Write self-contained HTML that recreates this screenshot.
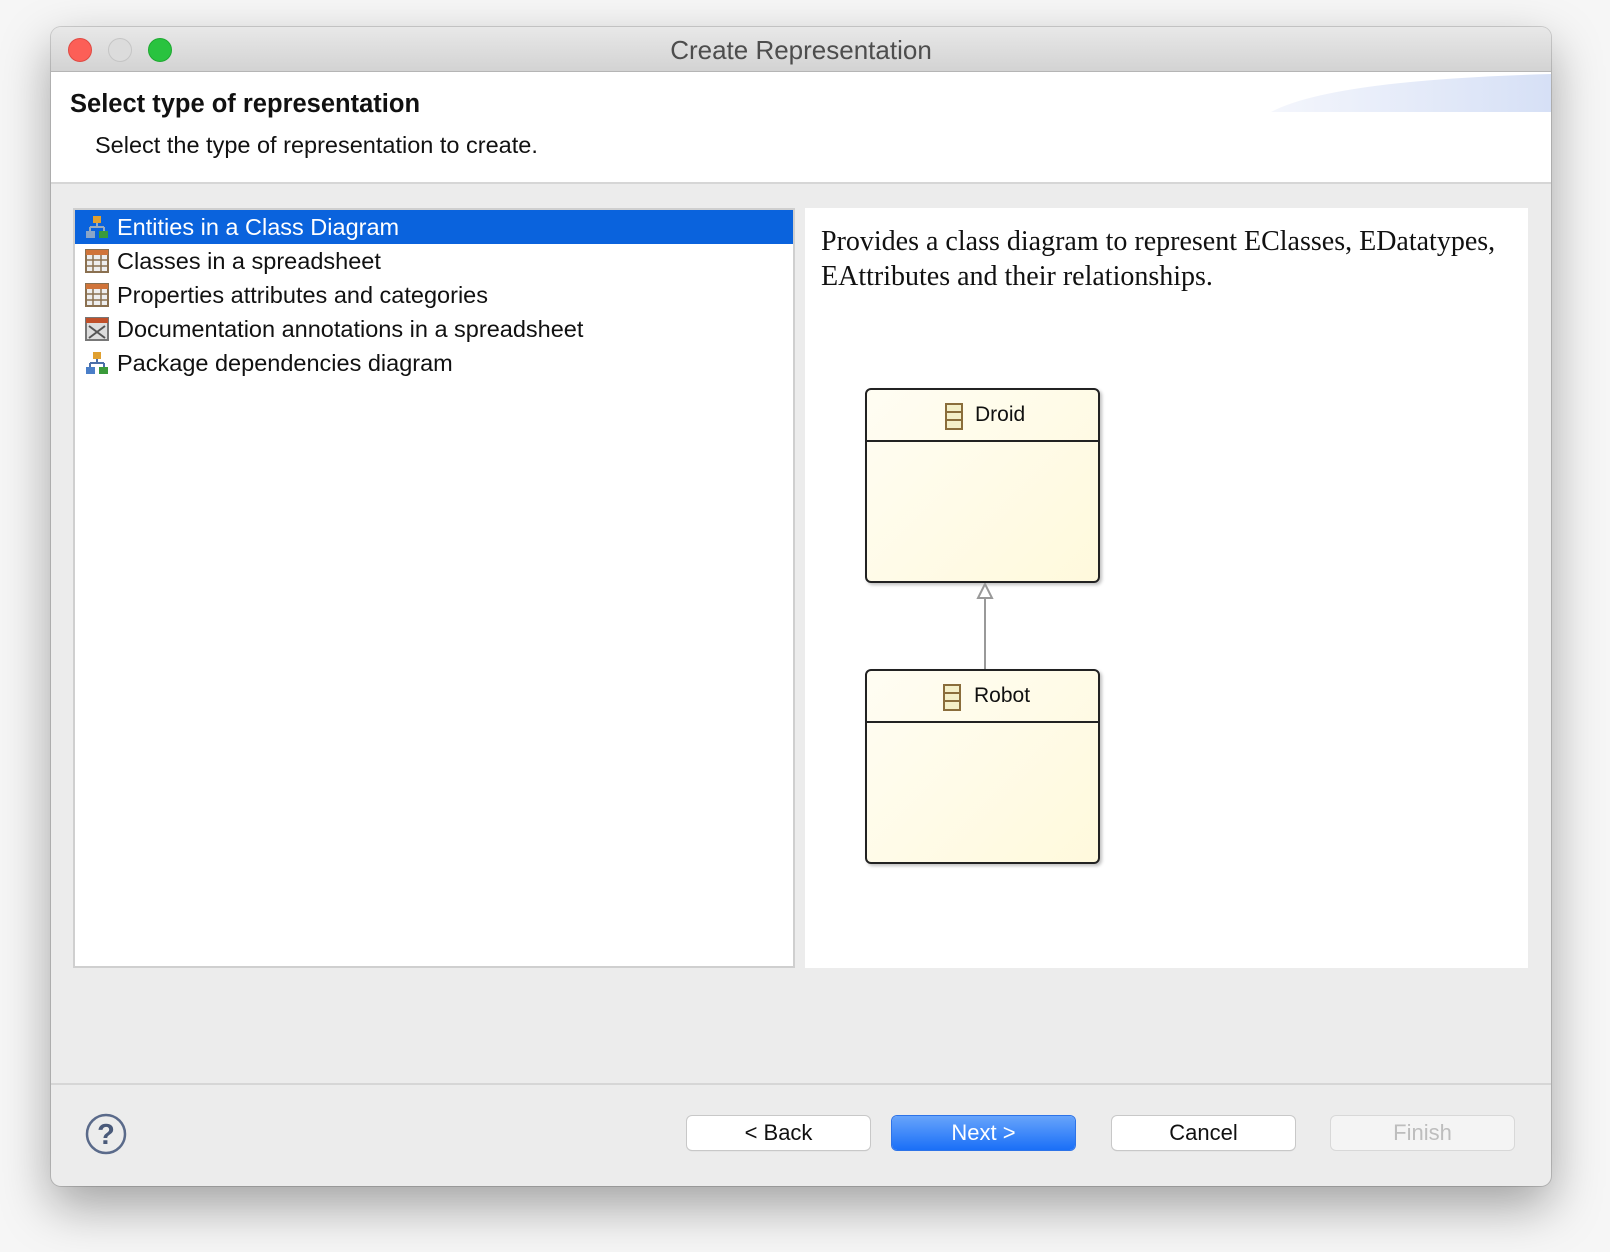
<!DOCTYPE html>
<html><head><meta charset="utf-8"><style>
*{margin:0;padding:0;box-sizing:border-box}
body{width:1610px;height:1252px;background:#f6f6f6;position:relative;overflow:hidden;font-family:"Liberation Sans",sans-serif}
.win{position:absolute;left:51px;top:27px;width:1500px;height:1159px;background:#ececec;border-radius:10px;box-shadow:0 20px 50px rgba(0,0,0,.35),0 0 0 1px rgba(0,0,0,.15);overflow:hidden}
.tb{position:absolute;left:0;top:0;width:100%;height:45px;background:linear-gradient(#e8e8e8,#d3d3d3);border-bottom:1px solid #b5b5b5;text-align:center;font-size:26px;line-height:47px;color:#4d4d4d}
.dot{position:absolute;top:11px;width:24px;height:24px;border-radius:50%}
.hdr{position:absolute;left:0;top:45px;width:100%;height:112px;background:#fff;border-bottom:2px solid #d6d6d6}
.list{position:absolute;left:22px;top:181px;width:722px;height:760px;background:#fff;border:2px solid #cfcfcf}
.row{position:absolute;left:0;width:100%;height:34px;font-size:23.5px;line-height:34px;padding-left:42px;color:#111}
.row.sel{background:#0a63dd;color:#fff}
.ico{position:absolute;left:10px;top:5px;width:24px;height:24px}
.rp{position:absolute;left:754px;top:181px;width:723px;height:760px;background:#fff}
.btn{position:absolute;top:1089px;width:183px;height:34px;background:#fff;border-radius:5px;box-shadow:0 0 0 1px #c8c8c8,0 1px 1px rgba(0,0,0,.2);font-size:22px;line-height:34px;text-align:center;color:#111}
.box{position:absolute;width:235px;border:2px solid #222;border-radius:6px;background:linear-gradient(135deg,#fffdf3,#fff9dc);box-shadow:2px 2px 3px rgba(0,0,0,.25)}
.box .h{height:52px;border-bottom:2px solid #222;font-size:21px;line-height:50px;position:relative;color:#111}
.ci{position:absolute;top:13px;width:18px;height:27px;border:2px solid #8a6d3b;background:#f4efc8}
.ci:before,.ci:after{content:"";position:absolute;left:0;right:0;height:2px;background:#8a6d3b}
.ci:before{top:6px}.ci:after{top:14px}
</style></head><body>
<div class="win">
 <div class="tb">Create Representation
  <div class="dot" style="left:17px;background:#fc5f57;border:1px solid #df4a43"></div>
  <div class="dot" style="left:57px;background:#dcdcdc;border:1px solid #c5c5c5"></div>
  <div class="dot" style="left:97px;background:#29c33f;border:1px solid #1ea931"></div>
 </div>
 <div class="hdr">
  <svg style="position:absolute;right:0;top:0" width="280" height="42"><defs><linearGradient id="g" x1="0" x2="1"><stop offset="0" stop-color="#f4f6fc"/><stop offset="1" stop-color="#d6e0f6"/></linearGradient></defs><path d="M0 40 Q60 8 280 2 L280 40 Z" fill="url(#g)"/></svg>
  <div style="position:absolute;left:19px;top:18px;font-size:25.5px;font-weight:bold;color:#111">Select type of representation</div>
  <div style="position:absolute;left:44px;top:60px;font-size:23.5px;color:#111">Select the type of representation to create.</div>
 </div>
 <div class="list">
  <div class="row sel" style="top:0"><svg class="ico" viewBox="0 0 24 24"><rect x="8" y="1" width="8" height="7" fill="#e0a030"/><path d="M12 8v4M5 12h14M5 12v4M19 12v4" stroke="#9ab" stroke-width="2" fill="none"/><rect x="1" y="16" width="9" height="7" fill="#8aa6c8"/><rect x="14" y="16" width="9" height="7" fill="#3a9a3a"/></svg>Entities in a Class Diagram</div>
  <div class="row" style="top:34px"><svg class="ico" viewBox="0 0 24 24"><rect x="1" y="1" width="22" height="22" fill="#eee" stroke="#8a7050" stroke-width="2"/><rect x="1" y="1" width="22" height="5" fill="#d0743a"/><path d="M1 11h22M1 17h22M8 6v17M16 6v17" stroke="#8a7050" stroke-width="1.5"/></svg>Classes in a spreadsheet</div>
  <div class="row" style="top:68px"><svg class="ico" viewBox="0 0 24 24"><rect x="1" y="1" width="22" height="22" fill="#eee" stroke="#8a7050" stroke-width="2"/><rect x="1" y="1" width="22" height="5" fill="#d0743a"/><path d="M1 11h22M1 17h22M8 6v17M16 6v17" stroke="#8a7050" stroke-width="1.5"/></svg>Properties attributes and categories</div>
  <div class="row" style="top:102px"><svg class="ico" viewBox="0 0 24 24"><rect x="1" y="1" width="22" height="22" fill="#ddd" stroke="#777" stroke-width="2"/><rect x="1" y="1" width="22" height="5" fill="#c0502a"/><path d="M4 9l16 12M20 9L4 21" stroke="#555" stroke-width="2"/></svg>Documentation annotations in a spreadsheet</div>
  <div class="row" style="top:136px"><svg class="ico" viewBox="0 0 24 24"><rect x="8" y="1" width="8" height="7" fill="#e0a030"/><path d="M12 8v4M5 12h14M5 12v4M19 12v4" stroke="#4a6ea8" stroke-width="2" fill="none"/><rect x="1" y="16" width="9" height="7" fill="#4a7ec8"/><rect x="14" y="16" width="9" height="7" fill="#3a9a3a"/></svg>Package dependencies diagram</div>
 </div>
 <div class="rp">
  <div style="position:absolute;left:16px;top:16px;width:700px;font-family:'Liberation Serif',serif;font-size:28px;line-height:35px;color:#111">Provides a class diagram to represent EClasses, EDatatypes, EAttributes and their relationships.</div>
  <div class="box" style="left:60px;top:180px;height:195px"><div class="h" style="padding-left:108px"><div class="ci" style="left:78px"></div>Droid</div></div>
  <svg style="position:absolute;left:165px;top:375px" width="30" height="88"><path d="M15 16V88" stroke="#999" stroke-width="2"/><path d="M15 1L8 15H22Z" fill="#fff" stroke="#999" stroke-width="2"/></svg>
  <div class="box" style="left:60px;top:461px;height:195px"><div class="h" style="padding-left:107px"><div class="ci" style="left:76px"></div>Robot</div></div>
 </div>
 <div style="position:absolute;left:0;top:1056px;width:100%;height:2px;background:#d6d6d6"></div>
 <svg style="position:absolute;left:34px;top:1086px" width="42" height="42"><circle cx="21" cy="21" r="19" fill="none" stroke="#5a6a8a" stroke-width="2.5"/><text x="21" y="31" text-anchor="middle" font-family="Liberation Sans" font-weight="bold" font-size="29" fill="#4a5a7a">?</text></svg>
 <div class="btn" style="left:636px">&lt; Back</div>
 <div class="btn" style="left:841px;background:linear-gradient(#67a4fb,#1a6ff7);color:#fff;box-shadow:0 0 0 1px #2d73e8">Next &gt;</div>
 <div class="btn" style="left:1061px">Cancel</div>
 <div class="btn" style="left:1280px;background:#f4f4f4;color:#bdbdbd;box-shadow:0 0 0 1px #d8d8d8">Finish</div>
</div>
</body></html>
